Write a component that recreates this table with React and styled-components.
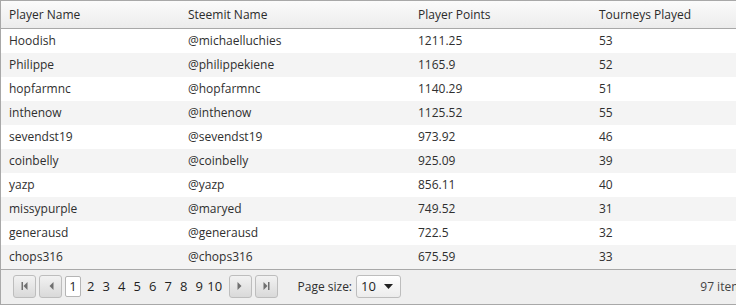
import styled, { createGlobalStyle } from "styled-components";

const GlobalStyle = createGlobalStyle`
  html, body {
    margin: 0;
    padding: 0;
    background: #ffffff;
    overflow: hidden;
  }
  body {
    font-family: "Open Sans", "Noto Sans", sans-serif;
    font-size: 12px;
    color: #2f2f2f;
  }
`;

const players = [
  ["Hoodish", "@michaelluchies", "1211.25", "53"],
  ["Philippe", "@philippekiene", "1165.9", "52"],
  ["hopfarmnc", "@hopfarmnc", "1140.29", "51"],
  ["inthenow", "@inthenow", "1125.52", "55"],
  ["sevendst19", "@sevendst19", "973.92", "46"],
  ["coinbelly", "@coinbelly", "925.09", "39"],
  ["yazp", "@yazp", "856.11", "40"],
  ["missypurple", "@maryed", "749.52", "31"],
  ["generausd", "@generausd", "722.5", "32"],
  ["chops316", "@chops316", "675.59", "33"],
];

const Grid = styled.div`
  width: 762px;
  border-left: 1px solid #a8a8a8;
  border-top: 1px solid #a8a8a8;
  border-bottom: 1px solid #a8a8a8;
  box-sizing: border-box;
`;

const Table = styled.table`
  width: 100%;
  border-collapse: collapse;
  table-layout: fixed;
`;

const HeadCell = styled.th`
  height: 27px;
  padding: 0 8px;
  text-align: left;
  font-weight: normal;
  color: #2b2b2b;
  background: linear-gradient(#fbfbfb, #ececec);
  border-bottom: 1px solid #a8a8a8;
  width: ${(p) => p.$w || "auto"};
  box-sizing: border-box;
`;

const Row = styled.tr`
  background: ${(p) => (p.$alt ? "#f4f4f4" : "#ffffff")};
`;

const Cell = styled.td`
  height: 24px;
  padding: 0 8px;
  white-space: nowrap;
  overflow: hidden;
  color: #2f2f2f;
`;

const Pager = styled.div`
  height: 35px;
  border-top: 1px solid #a8a8a8;
  background: #efefef;
  display: flex;
  align-items: center;
  padding: 0 12px 1px 12px;
  box-sizing: border-box;
`;

const NavButton = styled.div`
  width: 21px;
  height: 21px;
  border: 1px solid #bdbdbd;
  border-radius: 3px;
  background: linear-gradient(#f2f2f2, #d9d9d9);
  display: flex;
  align-items: center;
  justify-content: center;
  margin-right: ${(p) => p.$mr || 0}px;
  color: #6f6f6f;
`;

const Pages = styled.div`
  display: flex;
  align-items: center;
  margin-right: 6px;
`;

const PageNum = styled.span`
  min-width: 15.5px;
  height: 21px;
  line-height: 21px;
  text-align: center;
  font-size: 13px;
  color: #1f1f1f;
  box-sizing: border-box;
  ${(p) =>
    p.$current &&
    `
    background: #ffffff;
    border: 1px solid #b5b5b5;
    border-radius: 2px;
    line-height: 19px;
    min-width: 16px;
    margin: 0 2px 0 2px;
  `}
`;

const SizeLabel = styled.span`
  margin-left: 20px;
  margin-right: 4px;
  color: #2f2f2f;
`;

const Select = styled.div`
  width: 32px;
  height: 21px;
  border: 1px solid #bdbdbd;
  border-radius: 3px;
  background: linear-gradient(#ffffff, #ececec);
  display: flex;
  align-items: center;
  justify-content: space-between;
  padding: 0 7px 0 4px;
  box-sizing: content-box;
  font-size: 13px;
  color: #1f1f1f;
`;

const Info = styled.span`
  margin-left: auto;
  margin-right: 2px;
  color: #444;
`;

const Icon = ({ dir, bar }) => (
  <svg width="10" height="10" viewBox="0 0 10 10">
    {dir === "left" ? (
      <>
        {bar && <rect x="1.5" y="1" width="1.5" height="8" fill="currentColor" />}
        <polygon points="7.5,1 3.5,5 7.5,9" fill="currentColor" />
      </>
    ) : (
      <>
        <polygon points="2.5,1 6.5,5 2.5,9" fill="currentColor" />
        {bar && <rect x="7" y="1" width="1.5" height="8" fill="currentColor" />}
      </>
    )}
  </svg>
);

export default function App() {
  return (
    <>
      <GlobalStyle />
      <Grid>
        <Table>
          <thead>
            <tr>
              <HeadCell $w="179px">Player Name</HeadCell>
              <HeadCell $w="230px">Steemit Name</HeadCell>
              <HeadCell $w="181px">Player Points</HeadCell>
              <HeadCell>Tourneys Played</HeadCell>
            </tr>
          </thead>
          <tbody>
            {players.map((p, i) => (
              <Row key={p[0]} $alt={i % 2 === 1}>
                {p.map((v, j) => (
                  <Cell key={j}>{v}</Cell>
                ))}
              </Row>
            ))}
          </tbody>
        </Table>
        <Pager>
          <NavButton $mr={3}>
            <Icon dir="left" bar />
          </NavButton>
          <NavButton $mr={1}>
            <Icon dir="left" />
          </NavButton>
          <Pages>
            {[1, 2, 3, 4, 5, 6, 7, 8, 9, 10].map((n) => (
              <PageNum key={n} $current={n === 1}>
                {n}
              </PageNum>
            ))}
          </Pages>
          <NavButton $mr={3}>
            <Icon dir="right" />
          </NavButton>
          <NavButton>
            <Icon dir="right" bar />
          </NavButton>
          <SizeLabel>Page size:</SizeLabel>
          <Select>
            <span>10</span>
            <svg width="9" height="5" viewBox="0 0 9 5">
              <polygon points="0,0 9,0 4.5,5" fill="#222" />
            </svg>
          </Select>
          <Info>97 items</Info>
        </Pager>
      </Grid>
    </>
  );
}
